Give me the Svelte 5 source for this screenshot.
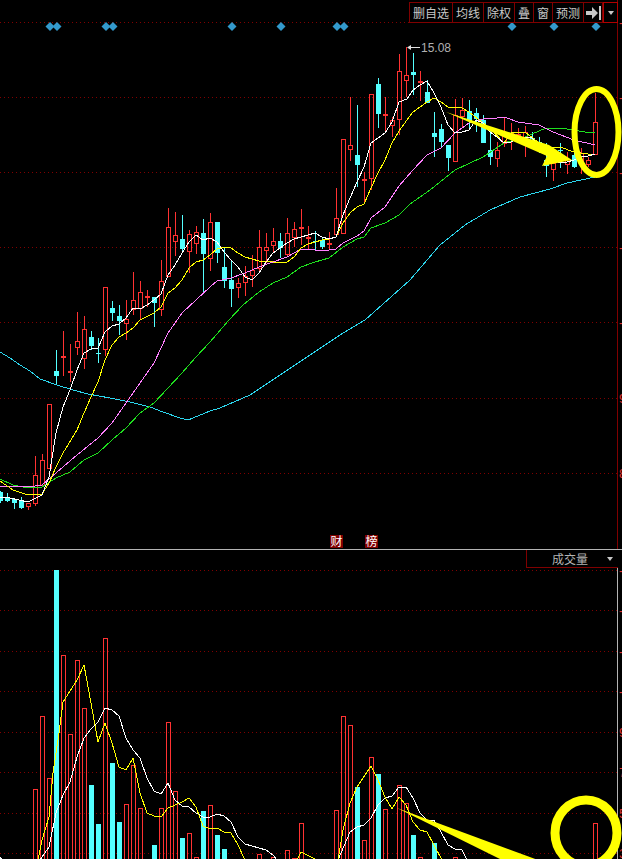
<script>
  const RED = "#ff3232";
  const CYAN = "#54ffff";

  // [high, bodyTop, bodyBottom, low, colour], one entry per trading day, 7px apart
  const candles = [
    [491, 492, 501, 503, "c"], [493, 497, 501, 502, "c"], [498, 499, 503, 509, "c"], [497, 500, 508, 509, "c"],
    [503, 503, 506, 510, "r"], [456, 475, 503, 506, "r"], [454, 460, 485, 486, "r"], [404, 404, 468, 468, "r"],
    [350, 371, 376, 384, "c"], [331, 356, 357, 376, "r"], [344, 371, 372, 382, "r"], [312, 341, 347, 355, "r"],
    [316, 329, 358, 369, "r"], [331, 337, 346, 350, "c"], [338, 353, 354, 363, "c"], [287, 287, 349, 356, "r"],
    [301, 308, 313, 321, "c"], [305, 316, 321, 335, "c"], [300, 319, 323, 340, "r"], [272, 300, 309, 315, "r"],
    [281, 292, 308, 319, "r"], [290, 296, 297, 307, "r"], [297, 297, 303, 327, "c"], [260, 281, 309, 316, "r"],
    [208, 227, 276, 276, "r"], [212, 235, 241, 256, "r"], [215, 239, 249, 252, "c"], [230, 234, 251, 273, "r"],
    [226, 232, 243, 254, "r"], [219, 233, 254, 294, "c"], [213, 222, 258, 271, "r"], [222, 222, 253, 263, "c"],
    [247, 267, 281, 288, "c"], [260, 280, 289, 307, "c"], [278, 283, 287, 298, "r"], [266, 276, 282, 296, "r"],
    [255, 270, 275, 287, "r"], [230, 247, 268, 273, "r"], [233, 247, 250, 263, "r"], [228, 241, 245, 252, "r"],
    [233, 241, 248, 258, "c"], [218, 233, 254, 257, "r"], [222, 229, 237, 247, "r"], [209, 227, 228, 245, "r"],
    [226, 237, 238, 250, "r"], [231, 241, 242, 251, "c"], [238, 240, 247, 249, "c"], [232, 243, 244, 250, "r"],
    [188, 218, 234, 236, "r"], [139, 139, 233, 234, "r"], [97, 145, 149, 161, "r"], [105, 155, 165, 187, "c"],
    [172, 179, 180, 203, "r"], [94, 94, 178, 190, "r"], [78, 84, 114, 128, "c"], [97, 114, 115, 132, "r"],
    [117, 120, 125, 137, "r"], [54, 71, 119, 135, "r"], [47, 75, 80, 97, "r"], [53, 72, 75, 95, "c"],
    [71, 81, 82, 101, "r"], [80, 92, 103, 103, "c"], [112, 133, 137, 157, "c"], [124, 129, 142, 148, "c"],
    [145, 145, 158, 171, "c"], [99, 115, 161, 161, "r"], [98, 110, 116, 128, "r"], [100, 111, 121, 128, "c"],
    [108, 113, 119, 132, "c"], [115, 120, 143, 143, "c"], [130, 150, 157, 165, "c"], [142, 150, 158, 167, "r"],
    [118, 132, 143, 147, "r"], [123, 133, 134, 150, "r"], [128, 134, 135, 140, "r"], [126, 132, 137, 157, "r"],
    [132, 138, 139, 143, "c"], [137, 142, 147, 153, "c"], [143, 160, 166, 177, "c"], [157, 163, 169, 181, "r"],
    [143, 150, 151, 168, "c"], [152, 159, 164, 174, "r"], [150, 155, 167, 168, "c"], [148, 153, 163, 174, "r"],
    [157, 160, 164, 167, "r"], [93, 122, 154, 155, "r"]
  ];

  const priceLines = [
    { color: "#2cd6ee", points: "0,352 10,358 20,365 30,371 40,379 57,385 73,390 88,394 110,398 130,402 150,407 163,412 180,418 188,420 210,411 220,408 250,395 280,375 310,355 340,335 365,320 410,280 440,245 465,225 490,210 520,197 550,189 567,183 595,177" },
    { color: "#1ee01e", points: "0,479 13,485 28,488 42,487 56,478 70,472 84,460 98,453 112,440 126,428 140,413 154,403 168,388 182,373 196,357 210,342 229,320 243,305 259,292 273,283 287,277 301,267 315,262 329,258 343,247 357,239 364,237 371,228 385,223 399,215 410,204 430,190 455,170 483,157 504,143 525,137 546,128 567,129 585,132 595,133" },
    { color: "#ff80ff", points: "0,486 13,486 28,487 42,485 56,473 77,455 98,438 112,423 126,403 140,383 154,363 168,333 182,313 196,300 210,287 217,281 231,278 245,273 259,267 273,262 287,257 301,249 315,250 329,250 336,249 343,243 357,236 364,231 371,218 385,207 399,186 413,170 427,155 441,148 455,133 469,123 483,119 497,118 504,117 518,122 539,125 553,132 574,140 595,145" },
    { color: "#ffff00", points: "0,481 13,490 28,495 42,494 49,483 56,467 63,453 77,430 84,413 91,397 98,382 105,360 112,345 119,337 126,333 133,328 140,320 154,313 161,307 168,293 175,288 182,280 189,268 196,262 203,260 210,255 217,249 224,247 231,248 238,253 245,257 252,259 259,261 273,262 287,262 294,257 301,248 308,244 315,242 322,240 329,239 336,237 343,223 350,213 357,207 364,204 371,188 378,173 385,160 392,143 399,131 407,120 413,112 427,102 434,98 441,102 448,107 462,108 469,112 483,123 490,128 504,143 511,133 525,132 539,143 553,148 560,147 574,152 595,155" },
    { color: "#ffffff", points: "0,497 10,498 28,502 42,495 49,477 56,433 63,407 70,390 77,370 84,353 91,349 98,348 105,332 112,326 119,324 126,318 133,308 140,309 147,305 154,300 161,294 168,275 175,265 182,253 189,242 196,235 203,240 210,238 217,242 224,252 231,260 238,267 245,277 252,280 259,273 266,262 273,253 280,248 287,243 294,239 301,237 308,235 315,233 322,237 329,239 336,237 343,215 350,198 357,182 364,167 371,143 378,138 385,133 392,122 399,102 407,99 413,90 420,85 427,81 434,93 441,107 448,125 455,133 462,132 469,130 476,120 483,123 490,132 497,137 504,143 511,142 518,138 525,137 532,138 539,147 546,155 553,160 560,163 567,162 574,160 581,157 588,156 595,154" }
  ];

  // [day, top of the bar, colour]; every bar runs on past the bottom of the window
  const volumes = [
    [5, 789, "r"], [6, 716, "r"], [7, 778, "r"], [8, 570, "c"], [9, 655, "r"], [10, 734, "r"], [11, 660, "r"],
    [12, 708, "r"], [13, 785, "c"], [14, 824, "c"], [15, 638, "r"], [16, 763, "c"], [17, 822, "c"], [18, 804, "r"],
    [19, 765, "r"], [20, 808, "r"], [22, 845, "c"], [23, 808, "r"], [24, 722, "r"], [25, 791, "r"], [26, 838, "c"],
    [27, 833, "r"], [28, 857, "r"], [29, 811, "c"], [30, 805, "r"], [31, 835, "c"], [32, 849, "c"], [37, 854, "r"],
    [39, 857, "r"], [41, 850, "r"], [42, 858, "r"], [43, 823, "r"], [48, 810, "r"], [49, 716, "r"], [50, 725, "r"],
    [51, 787, "c"], [52, 840, "r"], [53, 757, "r"], [54, 774, "c"], [55, 809, "r"], [57, 785, "r"], [58, 803, "r"],
    [59, 835, "c"], [60, 857, "r"], [62, 843, "c"], [65, 857, "r"], [85, 823, "r"]
  ];

  const volumeLines = [
    { color: "#ffffff", points: "0,857 2,860" },
    { color: "#ffffff", points: "40,860 49,847 56,813 63,795 70,782 77,757 84,738 91,729 98,722 105,708 112,710 119,716 126,738 133,750 140,758 147,778 154,791 161,794 168,783 175,800 182,806 189,807 196,813 203,817 210,817 217,814 224,816 231,822 238,837 245,844 259,848 266,850 273,855 277,860" },
    { color: "#ffffff", points: "338,860 350,832 357,827 364,825 371,818 378,805 385,798 392,796 399,787 406,787 413,798 420,813 427,820 434,820 441,832 448,845 455,849 462,850 467,860" },
    { color: "#ffff00", points: "38,860 42,840 49,817 53,773 59,733 63,702 77,680 84,665 91,703 98,742 105,723 112,743 119,767 126,770 133,758 140,793 147,813 154,816 161,817 168,808 175,805 182,802 189,798 196,807 203,826 210,829 217,828 224,832 231,833 238,845 245,860" },
    { color: "#ffff00", points: "297,860 301,852 313,858 316,860" },
    { color: "#ffff00", points: "338,860 343,830 350,803 357,787 371,766 378,780 385,797 392,809 399,797 406,805 413,822 420,830 427,832 434,845 442,860" }
  ];

  const priceGrid = [22, 97, 172, 247, 322, 398, 473];
  const volumeGrid = [570, 610, 651, 691, 732, 772, 813, 853];
  const diamonds = [50, 57, 106, 113, 232, 281, 337, 344, 512, 554, 596];
  const priceTicks = [[22, "-"], [97, "-"], [172, "-"], [247, "-"], [322, "-"], [398, "9"], [473, "8"]];
  const volumeTicks = [[570, "-"], [610, "-"], [651, "-"], [691, "-"], [732, "9"], [772, "7"], [813, "5"], [853, "3"]];
  const tools = ["删自选", "均线", "除权", "叠", "窗", "预测"];

  const dayX = (i) => 7 * i + 0.5;
</script>

<div class="terminal">
  <section class="pricePane">
    <svg viewBox="0 0 622 549" width="622" height="549">
      {#each priceGrid as y}
        <line class="grid" x1="0" x2="617" y1={y + 0.5} y2={y + 0.5} />
      {/each}
      <line class="axis" x1="617.5" x2="617.5" y1="0" y2="549" />
      {#each priceTicks as [y, label]}
        <text class="tick" x="619" y={y + 5}>{label}</text>
      {/each}

      {#each diamonds as x}
        <polygon class="diamond" points="{x - 4.5},26.5 {x},22 {x + 4.5},26.5 {x},31" />
      {/each}

      {#each candles as [high, top, bottom, low, colour], i}
        {#if colour === "c"}
          <line class="wick" stroke={CYAN} x1={dayX(i)} x2={dayX(i)} y1={high} y2={low} />
          <rect class="solid" fill={CYAN} x={dayX(i) - 2.5} y={top} width="5" height={bottom - top} />
        {:else if bottom - top < 2}
          <line class="wick" stroke={RED} x1={dayX(i)} x2={dayX(i)} y1={high} y2={low} />
          <rect class="solid" fill={RED} x={dayX(i) - 2.5} y={top} width="5" height="2" />
        {:else}
          <line class="wick" stroke={RED} x1={dayX(i)} x2={dayX(i)} y1={high} y2={top} />
          <line class="wick" stroke={RED} x1={dayX(i)} x2={dayX(i)} y1={bottom} y2={low} />
          <rect class="hollow" stroke={RED} x={dayX(i) - 2} y={top + 0.5} width="4" height={bottom - top} />
        {/if}
      {/each}

      {#each priceLines as line}
        <polyline class="ma" stroke={line.color} points={line.points} />
      {/each}

      <line class="peakArrow" x1="408" x2="420" y1="47.5" y2="47.5" />
      <polygon class="peakHead" points="407,47.5 411,45 411,50" />
      <text class="peak" x="421" y="51.5">15.08</text>

      <rect class="eventBg" x="330" y="535" width="13" height="13" />
      <text class="event" x="336.5" y="546">财</text>
      <rect class="eventBg" x="365" y="535" width="13" height="13" />
      <text class="event" x="371.5" y="546">榜</text>

      <polygon class="mark" points="446,112 549,145 572,160 542,166 547,156" />
      <ellipse class="ring" cx="596.5" cy="132" rx="22" ry="43" />
    </svg>

    <div class="toolbar">
      {#each tools as tool}
        <span class="tool">{tool}</span>
      {/each}
      <span class="tool iconTool">
        <svg viewBox="0 0 16 14" width="16" height="14">
          <polygon class="glyph" points="1,5 7,5 7,1 13,7 7,13 7,9 1,9" />
          <rect class="glyph" x="14" y="0" width="2" height="14" />
        </svg>
      </span>
      <span class="tool menuTool"><i class="caret"></i></span>
    </div>
  </section>

  <section class="volumePane">
    <svg viewBox="0 550 622 309" width="622" height="309">
      {#each volumeGrid as y}
        <line class="grid" x1="0" x2="617" y1={y + 0.5} y2={y + 0.5} />
      {/each}
      <line class="axisLight" x1="617.5" x2="617.5" y1="550" y2="859" />
      {#each volumeTicks as [y, label]}
        <text class="tick" x="619" y={y + 5}>{label}</text>
      {/each}

      {#each volumes as [i, top, colour]}
        {#if colour === "c"}
          <rect class="solid" fill={CYAN} x={dayX(i) - 2.5} y={top} width="5" height={860 - top} />
        {:else}
          <rect class="hollow" stroke={RED} x={dayX(i) - 2} y={top + 0.5} width="4" height={862 - top} />
        {/if}
      {/each}

      {#each volumeLines as line}
        <polyline class="ma" stroke={line.color} points={line.points} />
      {/each}

      <polygon class="mark" points="397,808 538,860 502,860" />
      <ellipse class="ringBold" cx="586" cy="833" rx="31" ry="33" />
    </svg>

    <div class="volumeTab">
      <span>成交量</span>
      <i class="caret"></i>
    </div>
  </section>
</div>

<style>
  :global(body) {
    background: #000;
  }

  .terminal {
    display: flex;
    flex-direction: column;
    width: 622px;
    height: 859px;
    overflow: hidden;
    background: #000;
    font-family: "Noto Sans CJK SC", "Liberation Sans", sans-serif;
  }

  .pricePane {
    position: relative;
    height: 549px;
    flex: none;
    border-bottom: 1px solid #b4b4b4;
  }

  .volumePane {
    position: relative;
    flex: 1;
  }

  svg {
    display: block;
  }

  .grid {
    stroke: #800000;
    stroke-width: 1;
    stroke-dasharray: 1 3;
  }

  .axis {
    stroke: #800000;
  }

  .axisLight {
    stroke: #b4b4b4;
  }

  .tick {
    fill: #e03030;
    font-family: "Liberation Sans", sans-serif;
    font-size: 13px;
  }

  .diamond {
    fill: #3399cc;
  }

  .wick {
    stroke-width: 1;
    shape-rendering: crispEdges;
  }

  .solid {
    shape-rendering: crispEdges;
  }

  .hollow {
    fill: none;
    stroke-width: 1;
    shape-rendering: crispEdges;
  }

  .ma {
    fill: none;
    stroke-width: 1;
    shape-rendering: crispEdges;
  }

  .peakArrow {
    stroke: #e0e0e0;
  }

  .peakHead {
    fill: #e0e0e0;
  }

  .peak {
    fill: #b0b0b0;
    font-family: "Liberation Sans", sans-serif;
    font-size: 12px;
  }

  .eventBg {
    fill: #800000;
  }

  .event {
    fill: #fff;
    font-size: 12px;
    text-anchor: middle;
  }

  .mark {
    fill: #ffff00;
  }

  .ring {
    fill: none;
    stroke: #ffff00;
    stroke-width: 6;
  }

  .ringBold {
    fill: none;
    stroke: #ffff00;
    stroke-width: 9;
  }

  .toolbar {
    position: absolute;
    top: 2px;
    right: 4px;
    display: flex;
    height: 19px;
    background: #000;
    border-left: 1px solid #800000;
    border-top: 1px solid #800000;
    border-bottom: 1px solid #800000;
  }

  .tool {
    display: flex;
    align-items: center;
    padding: 0 3px;
    border-right: 1px solid #800000;
    color: #c8c8c8;
    font-size: 12px;
    line-height: 1;
  }

  .iconTool {
    padding: 0 1px;
  }

  .glyph {
    fill: #c8c8c8;
  }

  .menuTool {
    justify-content: center;
    width: 15px;
    padding: 0;
    box-sizing: border-box;
    border: 1px solid #b00000;
    margin: -1px 0;
  }

  .caret {
    display: block;
    width: 0;
    height: 0;
    border-left: 3.5px solid transparent;
    border-right: 3.5px solid transparent;
    border-top: 4px solid #c8c8c8;
  }

  .volumeTab {
    position: absolute;
    top: 0;
    right: 4px;
    display: flex;
    align-items: center;
    width: 92px;
    height: 18px;
    padding: 0 4px 0 25px;
    box-sizing: border-box;
    gap: 19px;
    background: #000;
    border-left: 1px solid #800000;
    border-bottom: 1px solid #800000;
    color: #b4b4b4;
    font-size: 12px;
  }
</style>
